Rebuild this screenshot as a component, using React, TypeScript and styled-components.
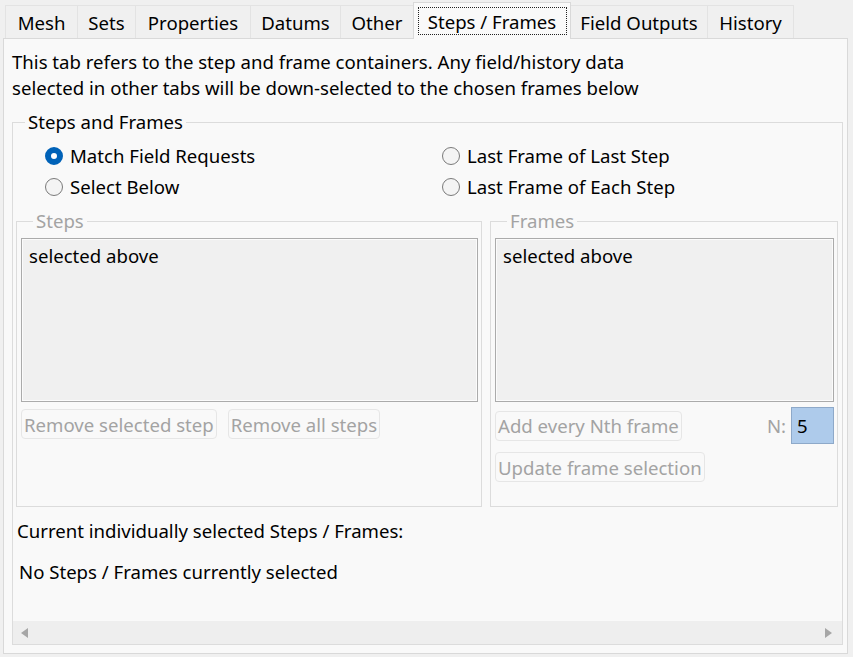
import styled, { createGlobalStyle, css } from "styled-components";

const GlobalStyle = createGlobalStyle`
  html, body {
    margin: 0;
    padding: 0;
    background: #f0f0f0;
  }
  body {
    font-family: "Noto Sans", "Open Sans", sans-serif;
    font-size: 18.6px;
    color: #000;
  }
`;

const Window = styled.div`
  width: 853px;
  height: 657px;
  box-sizing: border-box;
  padding: 0 5px 3px 3px;
  display: flex;
  flex-direction: column;
`;

const TabBar = styled.div`
  display: flex;
  align-items: flex-end;
  height: 38px;
  padding-left: 2px;
`;

const Tab = styled.div<{ $w: number; $active?: boolean }>`
  box-sizing: border-box;
  width: ${(p) => p.$w}px;
  height: 33px;
  margin-right: -1px;
  padding-top: 1px;
  display: flex;
  align-items: center;
  justify-content: center;
  background: #f0f0f0;
  border: 1px solid #e3e3e3;
  border-bottom: none;
  white-space: nowrap;
  ${(p) =>
    p.$active &&
    css`
      height: 37px;
      margin-bottom: -1px;
      padding-top: 0;
      background: #f9f9f9;
      border-color: #d9d9d9;
      position: relative;
      z-index: 1;
    `}
`;

const FocusRing = styled.span`
  box-sizing: border-box;
  display: flex;
  align-items: center;
  justify-content: center;
  width: 149px;
  height: 28px;
  border: 1px dotted #222;
`;

const Panel = styled.div`
  flex: 1;
  box-sizing: border-box;
  border: 1px solid #d9d9d9;
  background: #f9f9f9;
  padding: 10px 4px 8px 8px;
  display: flex;
  flex-direction: column;
`;

const Intro = styled.p`
  margin: 0;
  line-height: 26px;
`;

const Group = styled.fieldset<{ $grow?: boolean }>`
  margin: 0;
  min-width: 0;
  padding: 0;
  border: 1px solid #dcdcdc;
  display: flex;
  flex-direction: column;
  ${(p) => p.$grow && "flex: 1;"}
`;

const OuterGroup = styled(Group)`
  margin-top: 9px;
`;

const Legend = styled.legend<{ $disabled?: boolean }>`
  margin-left: 12px;
  padding: 0 3px;
  line-height: 24px;
  color: ${(p) => (p.$disabled ? "#a3a3a3" : "#000")};
`;

const RadioGrid = styled.div`
  display: grid;
  grid-template-columns: 397px 1fr;
  grid-auto-rows: 31px;
  padding-left: 32px;
  margin-top: 6px;
`;

const RadioItem = styled.label`
  display: flex;
  align-items: center;
  gap: 7px;
`;

const RadioDot = styled.span<{ $checked?: boolean }>`
  box-sizing: border-box;
  width: 18px;
  height: 18px;
  border-radius: 50%;
  flex-shrink: 0;
  border: 1px solid #7a7a7a;
  background: #f4f4f4;
  ${(p) =>
    p.$checked &&
    css`
      border: 6px solid #0062b8;
      background: #fff;
    `}
`;

const SubRow = styled.div`
  display: flex;
  gap: 8px;
  padding: 0 4px 0 3px;
  margin-top: 7px;
`;

const SubGroup = styled(Group)<{ $w?: number }>`
  ${(p) => (p.$w ? `width: ${p.$w}px; flex-shrink: 0;` : "flex: 1;")}
  box-sizing: border-box;
  padding: 0 3px 24px 4px;
`;

const ListBox = styled.div`
  margin-top: 5px;
  height: 164px;
  box-sizing: border-box;
  border: 1px solid #ababab;
  box-shadow: inset 0 0 0 1px #fbfbfb;
  background: #f0f0f0;
  padding: 5px 7px;
  line-height: 24px;
`;

const ButtonRow = styled.div<{ $gap: number; $top: number }>`
  display: flex;
  align-items: center;
  gap: ${(p) => p.$gap}px;
  margin-top: ${(p) => p.$top}px;
`;

const Button = styled.button`
  box-sizing: border-box;
  height: 30px;
  padding: 0 2px;
  font: inherit;
  color: #a3a3a3;
  background: #f9f9f9;
  border: 1px solid #e6e6e6;
  border-radius: 4px;
  white-space: nowrap;
`;

const NField = styled.div`
  margin-left: auto;
  display: flex;
  align-items: center;
  gap: 5px;
  color: #a3a3a3;
`;

const NInput = styled.div`
  box-sizing: border-box;
  width: 43px;
  height: 37px;
  padding-left: 5px;
  display: flex;
  align-items: center;
  color: #000;
  background: #aecbeb;
  border: 1px solid #8ea9c9;
`;

const Line = styled.div<{ $top: number; $left: number }>`
  line-height: 26px;
  margin-top: ${(p) => p.$top}px;
  padding-left: ${(p) => p.$left}px;
`;

const ScrollBar = styled.div`
  margin-top: auto;
  height: 23px;
  background: #eeeeee;
  display: flex;
  align-items: center;
  justify-content: space-between;
  padding: 0 10px 0 8px;
`;

const Arrow = styled.span<{ $dir: "left" | "right" }>`
  width: 0;
  height: 0;
  border-top: 5px solid transparent;
  border-bottom: 5px solid transparent;
  ${(p) =>
    p.$dir === "left"
      ? "border-right: 7px solid #a6a6a6;"
      : "border-left: 7px solid #a6a6a6;"}
`;

const tabs = [
  { label: "Mesh", w: 73 },
  { label: "Sets", w: 59 },
  { label: "Properties", w: 116 },
  { label: "Datums", w: 91 },
  { label: "Other", w: 74 },
  { label: "Steps / Frames", w: 158, active: true },
  { label: "Field Outputs", w: 138 },
  { label: "History", w: 87 },
];

const App = () => {
  return (
    <Window>
      <GlobalStyle />
      <TabBar>
        {tabs.map((t) => (
          <Tab key={t.label} $w={t.w} $active={t.active}>
            {t.active ? <FocusRing>{t.label}</FocusRing> : t.label}
          </Tab>
        ))}
      </TabBar>
      <Panel>
        <Intro>
          This tab refers to the step and frame containers. Any field/history data
          <br />
          selected in other tabs will be down-selected to the chosen frames below
        </Intro>
        <OuterGroup $grow>
          <Legend>Steps and Frames</Legend>
          <RadioGrid>
            <RadioItem>
              <RadioDot $checked />
              Match Field Requests
            </RadioItem>
            <RadioItem>
              <RadioDot />
              Last Frame of Last Step
            </RadioItem>
            <RadioItem>
              <RadioDot />
              Select Below
            </RadioItem>
            <RadioItem>
              <RadioDot />
              Last Frame of Each Step
            </RadioItem>
          </RadioGrid>
          <SubRow>
            <SubGroup $w={466}>
              <Legend $disabled>Steps</Legend>
              <ListBox>selected above</ListBox>
              <ButtonRow $gap={11} $top={7}>
                <Button disabled>Remove selected step</Button>
                <Button disabled>Remove all steps</Button>
              </ButtonRow>
            </SubGroup>
            <SubGroup>
              <Legend $disabled>Frames</Legend>
              <ListBox>selected above</ListBox>
              <ButtonRow $gap={0} $top={5}>
                <Button disabled>Add every Nth frame</Button>
                <NField>
                  N:
                  <NInput>5</NInput>
                </NField>
              </ButtonRow>
              <ButtonRow $gap={0} $top={8}>
                <Button disabled>Update frame selection</Button>
              </ButtonRow>
            </SubGroup>
          </SubRow>
          <Line $top={11} $left={4}>
            Current individually selected Steps / Frames:
          </Line>
          <Line $top={15} $left={6}>
            No Steps / Frames currently selected
          </Line>
          <ScrollBar>
            <Arrow $dir="left" />
            <Arrow $dir="right" />
          </ScrollBar>
        </OuterGroup>
      </Panel>
    </Window>
  );
};

export default App;
